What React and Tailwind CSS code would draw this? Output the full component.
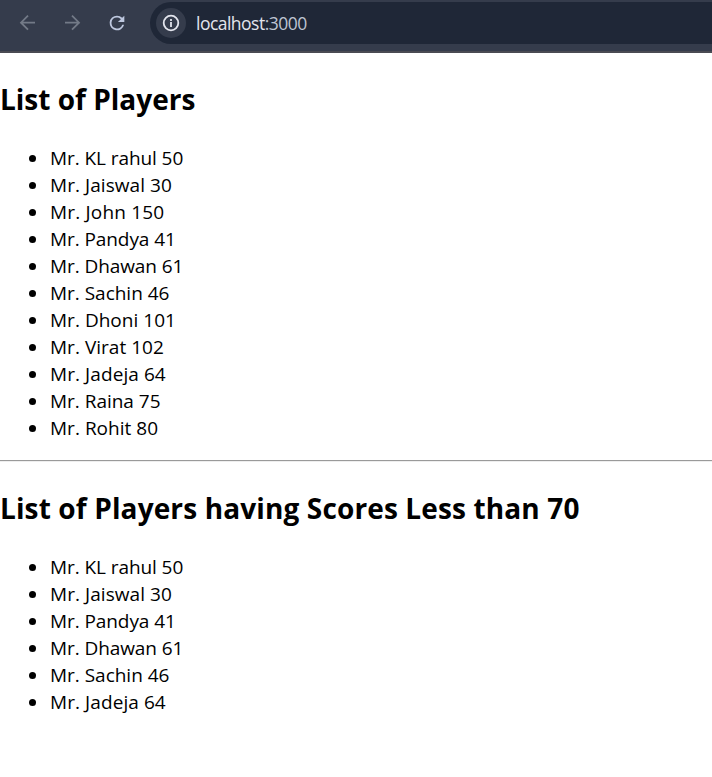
const players = [
  { name: "KL rahul", score: 50, spacing: "tracking-[-0.08px]" },
  { name: "Jaiswal", score: 30, spacing: "tracking-[0.06px]" },
  { name: "John", score: 150, spacing: "tracking-[0.18px]" },
  { name: "Pandya", score: 41, spacing: "tracking-[-0.08px]" },
  { name: "Dhawan", score: 61, spacing: "tracking-[-0.08px]" },
  { name: "Sachin", score: 46, spacing: "tracking-[-0.02px]" },
  { name: "Dhoni", score: 101, spacing: "tracking-[0.02px]" },
  { name: "Virat", score: 102, spacing: "tracking-[0.02px]" },
  { name: "Jadeja", score: 64, spacing: "tracking-[0.08px]" },
  { name: "Raina", score: 75, spacing: "tracking-[-0.02px]" },
  { name: "Rohit", score: 80, spacing: "tracking-[0.02px]" },
];

function PlayerList({ items }) {
  return (
    <ul>
      {items.map((p) => (
        <li key={p.name} className="flex h-[27px] items-center pl-[29px] text-[19px] leading-[27px]">
          <span className="mr-[14px] size-[7px] shrink-0 rounded-full bg-black" />
          <span className={p.spacing}>
            Mr. {p.name} {p.score}
          </span>
        </li>
      ))}
    </ul>
  );
}

function BrowserBar() {
  return (
    <header className="flex h-[53px] items-start border-b-2 border-[#4a4b53] bg-[#353c4c] pt-[2px]">
      <div className="flex h-[42px] w-[150px] shrink-0 items-center pl-[17px]">
        <svg className="size-[22px]" viewBox="0 0 22 22" fill="none" stroke="#737a87" strokeWidth="1.8">
          <path d="M18 10.7H4.5M11 3.7l-7 7 7 7" />
        </svg>
        <svg className="ml-[23px] size-[22px]" viewBox="0 0 22 22" fill="none" stroke="#737a87" strokeWidth="1.8">
          <path d="M3 10.7h13.5M10 3.7l7 7-7 7" />
        </svg>
        <svg className="ml-[22px] size-[22px]" viewBox="0 0 24 24" fill="#bec8df">
          <path d="M17.65 6.35A7.96 7.96 0 0 0 12 4a8 8 0 1 0 7.73 10h-2.08A6 6 0 1 1 12 6c1.66 0 3.14.69 4.22 1.78L13 11h7V4z" />
        </svg>
      </div>
      <div className="flex h-[42px] flex-1 items-center rounded-l-full bg-[#1f2737] pl-[6px]">
        <span className="flex size-[30px] items-center justify-center rounded-full bg-[#353c4c]">
          <svg className="size-[18px]" viewBox="0 0 18 18" fill="none" stroke="#e3e5ed" strokeWidth="1.8">
            <circle cx="9" cy="9" r="7.3" />
            <path d="M9 8v5M9 5v2" />
          </svg>
        </span>
        <span className="ml-[10px] text-[17.5px] leading-[24px] tracking-[-0.52px] text-[#e3e5ed]">
          localhost<span className="text-[#bec4d2]">:3000</span>
        </span>
      </div>
    </header>
  );
}

export default function App() {
  return (
    <div className="h-[777px] w-full overflow-hidden bg-white font-['Open_Sans','Noto_Sans',sans-serif] text-black">
      <BrowserBar />
      <main>
        <h2 className="mt-[26px] mb-[26px] h-[40px] text-[28px] leading-[40px] font-bold">List of Players</h2>
        <PlayerList items={players} />
        <hr className="mt-[18px] h-0 border-t border-b border-t-[#9a9a9a] border-b-[#eeeeee]" />
        <h2 className="mt-[26px] mb-[26px] h-[40px] text-[28px] leading-[40px] font-bold tracking-[0.13px] whitespace-nowrap">
          List of Players having Scores Less than 70
        </h2>
        <PlayerList items={players.filter((p) => p.score < 70)} />
      </main>
    </div>
  );
}
